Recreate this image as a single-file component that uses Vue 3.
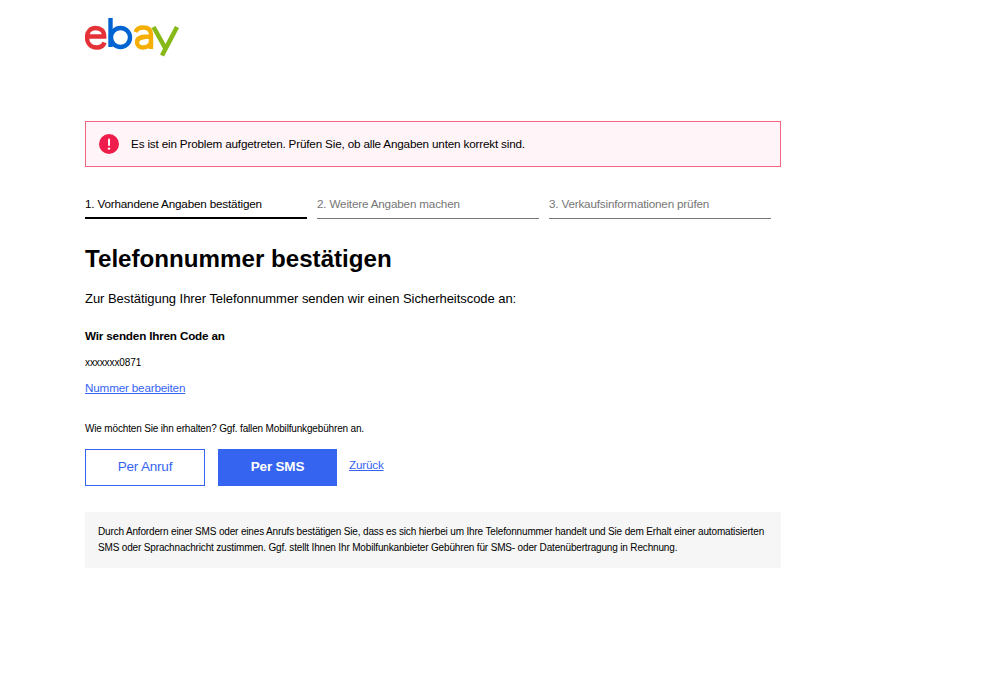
<script setup>
const steps = [
  { label: '1. Vorhandene Angaben bestätigen', active: true },
  { label: '2. Weitere Angaben machen', active: false },
  { label: '3. Verkaufsinformationen prüfen', active: false },
]
</script>

<template>
  <div class="page">
    <header class="logo-row">
      <svg class="logo" width="95" height="40" viewBox="0 0 95 40" role="img" aria-label="eBay">
        <path d="M2.200 19.500h17c0-5.500-3.500-8.500-8.500-8.500S2 14.500 2 20.500s3.800 10 9.500 10c4.200 0 7-1.700 8-5" fill="none" stroke="#e53238" stroke-width="4.400" />
        <path d="M25.500 1v29" fill="none" stroke="#0064d2" stroke-width="4.400" />
        <circle cx="35.500" cy="20.500" r="9.500" fill="none" stroke="#0064d2" stroke-width="4.400" />
        <path d="M50.500 15c1.300-3 4-4.500 7.500-4.500 5 0 8 2.400 8 7V32M66 19.500c-8 0-14 .5-14 5.700 0 3.300 2.500 5.300 6 5.300 4.500 0 8-2.800 8-7" fill="none" stroke="#f5af02" stroke-width="4.400" />
        <path d="M68.500 10l12 21.500M92 10L77 38.500" fill="none" stroke="#86b817" stroke-width="4.600" />
      </svg>
    </header>

    <div class="alert">
      <svg class="alert-icon" width="20" height="20" viewBox="0 0 20 20">
        <circle cx="10" cy="10" r="10" fill="#ee1d4b" />
        <rect x="9" y="4.500" width="2" height="7.500" rx="1" fill="#fff" />
        <circle cx="10" cy="14.600" r="1.200" fill="#fff" />
      </svg>
      <span class="alert-text">Es ist ein Problem aufgetreten. Prüfen Sie, ob alle Angaben unten korrekt sind.</span>
    </div>

    <ol class="steps">
      <li v-for="step in steps" :key="step.label" class="step" :class="{ active: step.active }">
        {{ step.label }}
      </li>
    </ol>

    <h1>Telefonnummer bestätigen</h1>
    <p class="intro">Zur Bestätigung Ihrer Telefonnummer senden wir einen Sicherheitscode an:</p>

    <p class="send-title">Wir senden Ihren Code an</p>
    <p class="number">xxxxxxx0871</p>
    <a class="edit" href="#">Nummer bearbeiten</a>

    <p class="question">Wie möchten Sie ihn erhalten? Ggf. fallen Mobilfunkgebühren an.</p>

    <div class="actions">
      <button class="btn secondary">Per Anruf</button>
      <button class="btn primary">Per SMS</button>
      <a class="back" href="#">Zurück</a>
    </div>

    <div class="legal">
      Durch Anfordern einer SMS oder eines Anrufs bestätigen Sie, dass es sich hierbei um Ihre Telefonnummer handelt und Sie dem Erhalt einer automatisierten<br />
      SMS oder Sprachnachricht zustimmen. Ggf. stellt Ihnen Ihr Mobilfunkanbieter Gebühren für SMS- oder Datenübertragung in Rechnung.
    </div>
  </div>
</template>

<style scoped>
.page {
  width: 696px;
  margin-left: 85px;
  font-family: "Liberation Sans", Arial, sans-serif;
  color: #000;
}

.logo-row {
  height: 121px;
  box-sizing: border-box;
  padding-top: 17px;
}

.logo {
  display: block;
}

.alert {
  display: flex;
  align-items: center;
  gap: 12px;
  height: 46px;
  box-sizing: border-box;
  padding-left: 13px;
  border: 1px solid #f5657f;
  background: #fff4f7;
  font-size: 11.7px;
  letter-spacing: -0.17px;
}

.alert-icon {
  flex: none;
}

.alert-text {
  padding-bottom: 2px;
}

.steps {
  display: flex;
  gap: 10px;
  list-style: none;
  margin: 24px 0 0;
  padding: 0;
}

.step {
  width: 222px;
  height: 27px;
  line-height: 25px;
  font-size: 11.7px;
  letter-spacing: -0.18px;
  color: #767676;
  border-bottom: 1px solid #767676;
}

.step.active {
  height: 26px;
  color: #000;
  border-bottom: 2px solid #000;
}

h1 {
  margin: 25px 0 0;
  font-size: 24.15px;
  line-height: 30px;
  font-weight: 700;
}

.intro {
  margin: 15px 0 0;
  font-size: 13px;
  letter-spacing: -0.05px;
  line-height: 20px;
}

.send-title {
  margin: 19px 0 0;
  font-size: 11.7px;
  letter-spacing: -0.18px;
  line-height: 16px;
  font-weight: 700;
}

.number {
  margin: 12px 0 0;
  font-size: 10px;
  letter-spacing: -0.1px;
  line-height: 14px;
}

.edit {
  display: block;
  margin-top: 10px;
  font-size: 11.7px;
  letter-spacing: -0.18px;
  line-height: 16px;
  color: #3665f3;
}

.question {
  margin: 26px 0 0;
  font-size: 10px;
  letter-spacing: -0.16px;
  line-height: 14px;
}

.actions {
  display: flex;
  align-items: flex-start;
  margin-top: 13px;
}

.btn {
  height: 37px;
  font-family: inherit;
  font-size: 13.5px;
  letter-spacing: -0.2px;
  border: 1px solid #3564f0;
  padding: 0 0 2px;
}

.secondary {
  width: 120px;
  margin-right: 13px;
  background: #fff;
  color: #3564f0;
}

.primary {
  width: 119px;
  margin-right: 12px;
  background: #3564f0;
  color: #fff;
  font-weight: 700;
}

.back {
  margin-top: 8px;
  font-size: 11.7px;
  letter-spacing: -0.18px;
  line-height: 16px;
  color: #3665f3;
}

.legal {
  margin-top: 26px;
  height: 56px;
  box-sizing: border-box;
  padding: 12px 13px;
  background: #f6f6f6;
  font-size: 10px;
  letter-spacing: -0.16px;
  line-height: 16px;
  white-space: nowrap;
}
</style>
